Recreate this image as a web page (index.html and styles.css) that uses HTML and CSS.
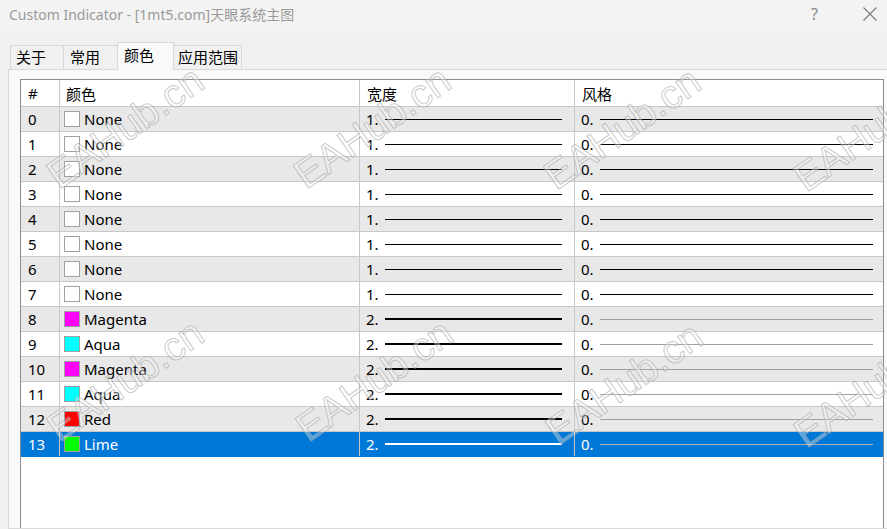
FILE: index.html
```html
<!DOCTYPE html>
<html>
<head>
<meta charset="utf-8">
<link rel="stylesheet" href="styles.css">
</head>
<body>
<div class="titlebar">
  <div class="title">Custom Indicator - [1mt5.com]天眼系统主图</div>
  <div class="controls">
    <span class="help">?</span>
    <svg class="close" width="14" height="14" viewBox="0 0 14 14"><path d="M0.5 0.5 L13.5 13.5 M13.5 0.5 L0.5 13.5" stroke="#7a7a7a" stroke-width="1.1" fill="none"/></svg>
  </div>
</div>
<div class="tabs">
  <div class="tab t1">关于</div>
  <div class="tab t2">常用</div>
  <div class="tab t3 active">颜色</div>
  <div class="tab t4">应用范围</div>
</div>
<div class="panel">
  <div class="table">
    <div class="row head">
      <div class="cell c-num">#</div>
      <div class="cell c-col">颜色</div>
      <div class="cell c-w">宽度</div>
      <div class="cell c-s">风格</div>
    </div>
    <div class="row even"><div class="cell c-num">0</div><div class="cell c-col"><span class="sw none"></span>None</div><div class="cell c-w">1.<span class="ln w1"></span></div><div class="cell c-s">0.<span class="ln s-dark"></span></div></div>
    <div class="row"><div class="cell c-num">1</div><div class="cell c-col"><span class="sw none"></span>None</div><div class="cell c-w">1.<span class="ln w1"></span></div><div class="cell c-s">0.<span class="ln s-dark"></span></div></div>
    <div class="row even"><div class="cell c-num">2</div><div class="cell c-col"><span class="sw none"></span>None</div><div class="cell c-w">1.<span class="ln w1"></span></div><div class="cell c-s">0.<span class="ln s-dark"></span></div></div>
    <div class="row"><div class="cell c-num">3</div><div class="cell c-col"><span class="sw none"></span>None</div><div class="cell c-w">1.<span class="ln w1"></span></div><div class="cell c-s">0.<span class="ln s-dark"></span></div></div>
    <div class="row even"><div class="cell c-num">4</div><div class="cell c-col"><span class="sw none"></span>None</div><div class="cell c-w">1.<span class="ln w1"></span></div><div class="cell c-s">0.<span class="ln s-dark"></span></div></div>
    <div class="row"><div class="cell c-num">5</div><div class="cell c-col"><span class="sw none"></span>None</div><div class="cell c-w">1.<span class="ln w1"></span></div><div class="cell c-s">0.<span class="ln s-dark"></span></div></div>
    <div class="row even"><div class="cell c-num">6</div><div class="cell c-col"><span class="sw none"></span>None</div><div class="cell c-w">1.<span class="ln w1"></span></div><div class="cell c-s">0.<span class="ln s-dark"></span></div></div>
    <div class="row"><div class="cell c-num">7</div><div class="cell c-col"><span class="sw none"></span>None</div><div class="cell c-w">1.<span class="ln w1"></span></div><div class="cell c-s">0.<span class="ln s-dark"></span></div></div>
    <div class="row even"><div class="cell c-num">8</div><div class="cell c-col"><span class="sw magenta"></span>Magenta</div><div class="cell c-w">2.<span class="ln w2"></span></div><div class="cell c-s">0.<span class="ln s-gray"></span></div></div>
    <div class="row"><div class="cell c-num">9</div><div class="cell c-col"><span class="sw aqua"></span>Aqua</div><div class="cell c-w">2.<span class="ln w2"></span></div><div class="cell c-s">0.<span class="ln s-gray"></span></div></div>
    <div class="row even"><div class="cell c-num">10</div><div class="cell c-col"><span class="sw magenta"></span>Magenta</div><div class="cell c-w">2.<span class="ln w2"></span></div><div class="cell c-s">0.<span class="ln s-gray"></span></div></div>
    <div class="row"><div class="cell c-num">11</div><div class="cell c-col"><span class="sw aqua"></span>Aqua</div><div class="cell c-w">2.<span class="ln w2"></span></div><div class="cell c-s">0.<span class="ln s-gray"></span></div></div>
    <div class="row even"><div class="cell c-num">12</div><div class="cell c-col"><span class="sw red"></span>Red</div><div class="cell c-w">2.<span class="ln w2"></span></div><div class="cell c-s">0.<span class="ln s-gray"></span></div></div>
    <div class="row selected"><div class="cell c-num">13</div><div class="cell c-col"><span class="sw lime"></span>Lime</div><div class="cell c-w">2.<span class="ln w2"></span></div><div class="cell c-s">0.<span class="ln s-gray"></span></div></div>
  </div>
</div>
<div class="wm">
  <span class="m a1">EAHub.cn</span>
  <span class="m a2">EAHub.cn</span>
  <span class="m a3">EAHub.cn</span>
  <span class="m a4">EAHub.cn</span>
  <span class="m b1">EAHub.cn</span>
  <span class="m b2">EAHub.cn</span>
  <span class="m b3">EAHub.cn</span>
  <span class="m b4">EAHub.cn</span>
</div>
</body>
</html>
```
FILE: styles.css
```css
* { box-sizing: border-box; }
html, body { margin: 0; padding: 0; }
body {
  width: 887px;
  height: 529px;
  overflow: hidden;
  position: relative;
  background: #f0f0f0;
  font-family: "Noto Sans", "Noto Sans CJK SC", sans-serif;
  font-size: 15px;
  color: #000;
}
.titlebar {
  height: 32px;
  background: #f3f3f3;
  display: flex;
  align-items: center;
  padding: 0 0 5px 9px;
  color: #9a9a9a;
}
.title { flex: 1; white-space: nowrap; font-size: 14px; }
.controls { display: flex; align-items: center; }
.help { color: #8a8a8a; font-size: 16px; margin-right: 45px; }
.close { display: block; margin-right: 10px; }

.tabs {
  height: 37px;
  display: flex;
  align-items: flex-end;
  padding-left: 10px;
}
.tab {
  height: 24px;
  border: 1px solid #d9d9d9;
  border-bottom: none;
  margin-left: -1px;
  padding-left: 5px;
  line-height: 22px;
  background: #f0f0f0;
  white-space: nowrap;
}
.t1 { margin-left: 0; width: 54px; }
.t2 { width: 55px; padding-left: 6px; }
.t3 { width: 57px; padding-left: 6px; }
.t4 { width: 69px; padding-left: 4px; }
.tab.active {
  height: 28px;
  margin-bottom: -1px;
  background: #f9f9f9;
  position: relative;
  z-index: 2;
  line-height: 24px;
}

.panel {
  margin-left: 8px;
  height: 460px;
  border: 1px solid #d9d9d9;
  border-right: none;
  background: #f9f9f9;
  padding: 9px 0 0 11px;
  overflow: hidden;
}
.table {
  width: 864px;
  height: 460px;
  border: 1px solid #8c8c94;
  background: #fff;
}
.row {
  display: grid;
  grid-template-columns: 39px 300px 215px 308px;
  height: 25px;
  border-bottom: 1px solid #c8c8c8;
}
.row.head { height: 27px; background: #fff; }
.row.even { background: #e8e8e8; }
.row.selected { background: #0078d7; color: #fff; border-bottom-color: #0078d7; }
.cell {
  display: flex;
  align-items: center;
  border-right: 1px solid #c8c8c8;
  white-space: nowrap;
  overflow: hidden;
}
.cell.c-s { border-right: none; }
.c-num { padding-left: 7px; }
.c-col { padding-left: 4px; }
.head .c-col { padding-left: 6px; }
.c-w { padding-left: 6px; padding-right: 12px; }
.head .c-w { padding-left: 7px; }
.c-s { padding-left: 6px; padding-right: 10px; }
.head .c-s { padding-left: 7px; }

.sw {
  width: 16px;
  height: 16px;
  border: 1px solid #a0a0a0;
  margin-right: 4px;
  flex: none;
}
.sw.none { background: #fff; }
.sw.magenta { background: #ff00ff; }
.sw.aqua { background: #00ffff; }
.sw.red { background: #ff0000; }
.sw.lime { background: #00ff00; }

.ln { flex: 1; margin-left: 6px; }
.ln.w1 { height: 1px; background: #000; }
.ln.w2 { height: 2px; background: #000; }
.ln.s-dark { height: 1px; background: #000; }
.ln.s-gray { height: 1px; background: #a0a0a0; }
.selected .ln.w2 { background: #fff; }
.selected .ln.s-gray { background: #b0b0b0; }

.wm {
  position: absolute;
  left: 0; top: 0; right: 0; bottom: 0;
  pointer-events: none;
  z-index: 5;
}
.m {
  position: absolute;
  font-family: "Liberation Sans", sans-serif;
  font-size: 40px;
  line-height: 1;
  color: rgba(255, 255, 255, 0.35);
  -webkit-text-stroke: 1px rgba(165, 165, 165, 0.6);
  transform: translate(-50%, -50%) rotate(-35deg);
  white-space: nowrap;
}
.a1 { left: 125px; top: 127px; }
.a2 { left: 372px; top: 127px; }
.a3 { left: 622px; top: 128px; }
.a4 { left: 872px; top: 130px; }
.b1 { left: 125px; top: 380px; }
.b2 { left: 374px; top: 380px; }
.b3 { left: 624px; top: 383px; }
.b4 { left: 872px; top: 386px; }
```
